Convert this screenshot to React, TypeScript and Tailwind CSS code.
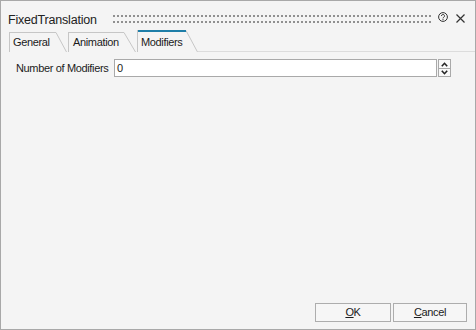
import React from 'react';

const tabText = "text-[11px] tracking-[-0.35px] text-[#1b1b1b]";

const Slant: React.FC<{ w: number; h: number }> = ({ w, h }) => (
  <svg width={w} height={h} className="block shrink-0">
    <line x1="0" y1="0.5" x2={w - 0.5} y2={h} stroke="#c6c6c6" strokeWidth="1" />
  </svg>
);

const App: React.FC = () => {
  return (
    <div className="w-[476px] h-[330px] border border-[#a8a8a8] bg-[#f4f4f4] flex flex-col overflow-hidden font-['Liberation_Sans',Arial,sans-serif] text-[#1b1b1b]">
      {/* Title bar */}
      <div className="flex h-[29px] pt-[9px] pl-[7px] pr-[10px] shrink-0">
        <div className="h-[20px] flex items-center text-[12.5px] tracking-[-0.2px] text-[#222]">FixedTranslation</div>
        <svg className="flex-1 ml-[16px] mt-[5px]" height="8">
          <defs>
            <pattern id="grip" width="4" height="6" patternUnits="userSpaceOnUse">
              <rect width="2" height="2" fill="#909090" />
            </pattern>
          </defs>
          <rect width="100%" height="8" fill="url(#grip)" />
        </svg>
        <svg width="10" height="10" className="ml-[6px] mt-[2px] shrink-0" viewBox="0 0 10 10">
          <circle cx="5" cy="5" r="4.4" fill="none" stroke="#333" strokeWidth="1" />
          <path d="M3.5 4 A1.5 1.5 0 1 1 5.8 5.2 C5.2 5.6 5 5.8 5 6.4" fill="none" stroke="#333" strokeWidth="1" />
          <circle cx="5" cy="7.6" r="0.6" fill="#333" />
        </svg>
        <svg width="9" height="9" className="ml-[8px] mt-[4px] shrink-0" viewBox="0 0 9 9">
          <path d="M0.5 0.5 L8.5 8.5 M8.5 0.5 L0.5 8.5" stroke="#333" strokeWidth="1.2" />
        </svg>
      </div>

      {/* Tabs */}
      <div className="flex items-end h-[22px] pl-[8px] shrink-0">
        <div className="flex">
          <div className={`h-[20px] w-[47px] border-l border-t border-[#c6c6c6] pl-[3px] flex items-center ${tabText}`}>General</div>
          <Slant w={11} h={20} />
        </div>
        <div className="flex ml-[1px]">
          <div className={`h-[20px] w-[56px] border-l border-t border-[#c6c6c6] pl-[4px] flex items-center ${tabText}`}>Animation</div>
          <Slant w={12} h={20} />
        </div>
        <div className="flex ml-[1px]">
          <div className={`h-[22px] w-[49px] border-l border-[#c6c6c6] flex flex-col`}>
            <div className="h-[2px] bg-[#1e7ea8]" />
            <div className={`flex-1 pl-[3px] flex items-center ${tabText}`}>Modifiers</div>
          </div>
          <Slant w={12} h={22} />
        </div>
        <div className="flex-1 h-[22px] border-b border-[#dcdcdc]" />
      </div>

      {/* Content */}
      <div className="flex items-center h-[18px] mt-[7px] pl-[15px] pr-[24px] shrink-0">
        <div className={`w-[98px] ${tabText}`}>Number of Modifiers</div>
        <div className={`flex-1 h-[18px] border border-[#a9a9a9] bg-white pl-[2px] flex items-center ${tabText}`}>0</div>
        <div className="ml-[1px] w-[13px] h-[18px] border border-[#a9a9a9] bg-[#f8f8f8] flex flex-col">
          <div className="h-[8px] flex items-center justify-center">
            <svg width="7" height="5" viewBox="0 0 7 5">
              <path d="M0.8 4.2 L3.5 1.3 L6.2 4.2" fill="none" stroke="#222" strokeWidth="1.6" />
            </svg>
          </div>
          <div className="flex-1 border-t border-[#a9a9a9] flex items-center justify-center">
            <svg width="7" height="5" viewBox="0 0 7 5">
              <path d="M0.8 0.8 L3.5 3.7 L6.2 0.8" fill="none" stroke="#222" strokeWidth="1.6" />
            </svg>
          </div>
        </div>
      </div>

      {/* Buttons */}
      <div className="mt-auto flex justify-end gap-[2px] pr-[8px] pb-[7px]">
        <button className={`w-[76px] h-[19px] border border-[#adadad] bg-[#f6f6f6] flex items-center justify-center ${tabText}`}>
          <span><span className="underline">O</span>K</span>
        </button>
        <button className={`w-[74px] h-[19px] border border-[#adadad] bg-[#f6f6f6] flex items-center justify-center ${tabText}`}>
          <span><span className="underline">C</span>ancel</span>
        </button>
      </div>
    </div>
  );
};

export default App;
